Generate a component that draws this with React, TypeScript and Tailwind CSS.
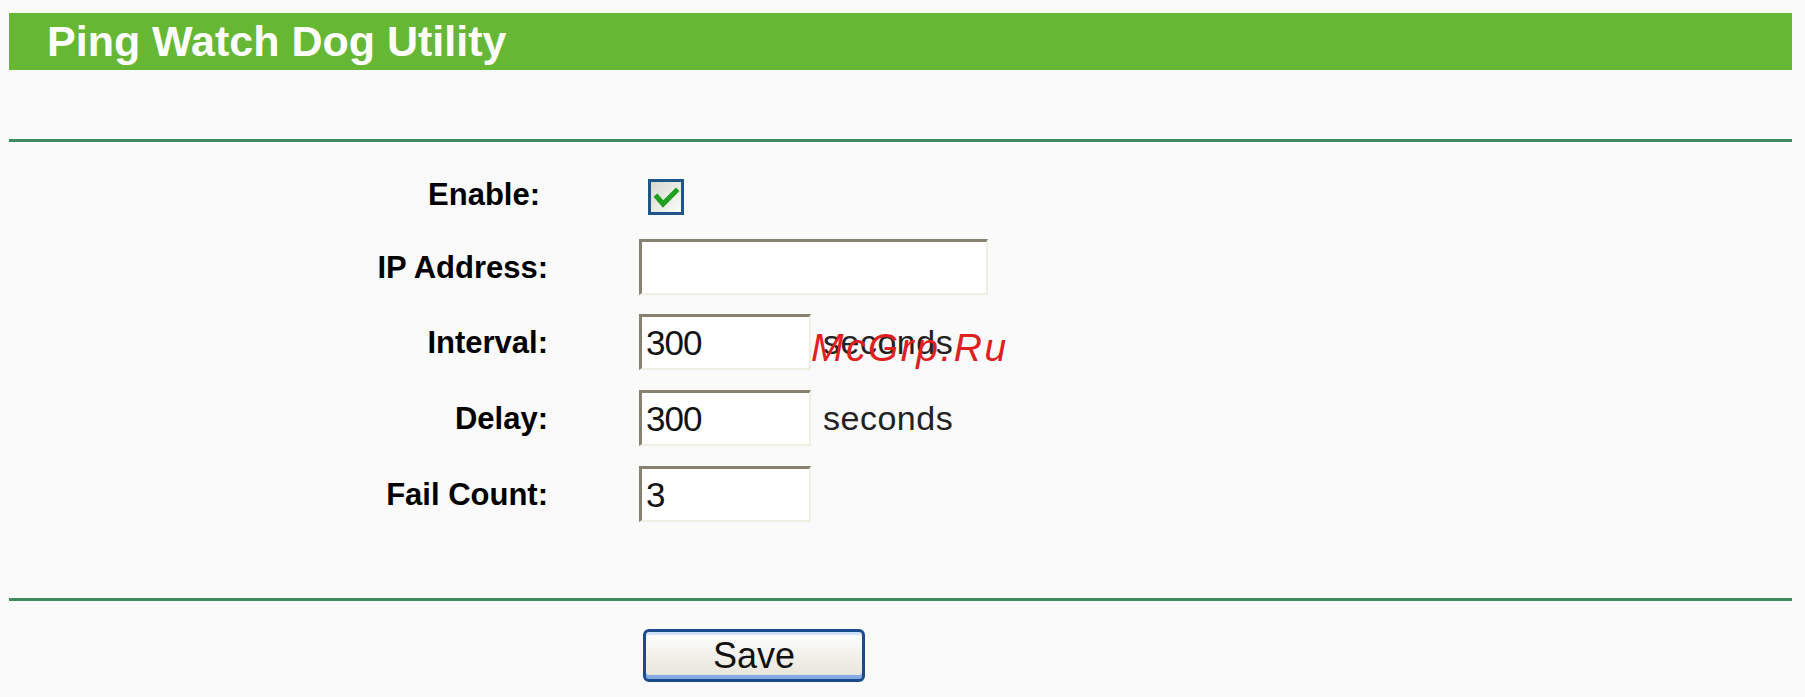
import type { ReactNode } from 'react';

const FONT = "font-['Liberation_Sans',Arial,sans-serif]";

function Row({ label, h, labelPad = '', children }: { label: string; h: string; labelPad?: string; children: ReactNode }) {
  return (
    <div className={`flex items-center ${h}`}>
      <div className={`w-[539px] text-right text-[31px] font-bold leading-none text-black ${labelPad}`}>{label}</div>
      <div className="ml-[91px] flex items-center">{children}</div>
    </div>
  );
}

function TextBox({ value, w }: { value: string; w: string }) {
  return (
    <div
      className={`flex h-[56px] ${w} items-center border-t-[3px] border-l-[3px] border-r-2 border-b-2 border-t-[#85836f] border-l-[#85836f] border-r-[#efeee0] border-b-[#efeee0] bg-white pl-[4px] text-[35px] leading-none tracking-[-1px] text-[#111]`}
    >
      {value}
    </div>
  );
}

function Seconds({ children }: { children?: ReactNode }) {
  return (
    <span className="relative ml-[12px] text-[34px] leading-none tracking-[0.5px] text-[#222]">
      seconds
      {children}
    </span>
  );
}

export default function App() {
  return (
    <div className={`min-h-screen w-full bg-[#fafafa] ${FONT}`}>
      <div className="w-[1783px] pl-[9px] pt-[13px] box-content">
        {/* title bar */}
        <div className="flex h-[57px] items-center bg-[#66b834] pl-[38px]">
          <h1 className="text-[43px] font-bold leading-none text-white">Ping Watch Dog Utility</h1>
        </div>

        <div className="mt-[69px] h-[3px] bg-[#3d8b5e]" />

        {/* form */}
        <div className="pt-[22px]">
          <Row label="Enable:" h="h-[66px]" labelPad="pr-[8px] -mt-[6px]">
            <div className="ml-[9px] flex h-[36px] w-[36px] items-center justify-center border-[3px] border-[#1f5587] bg-gradient-to-br from-[#d9d9d2] to-[#fbfbf8]">
              <svg width="30" height="30" viewBox="0 0 30 30">
                <polyline points="6,15 12,22 25,9" fill="none" stroke="#1fa01f" strokeWidth="5" strokeLinecap="square" />
              </svg>
            </div>
          </Row>
          <Row label="IP Address:" h="h-[74px]">
            <TextBox value="" w="w-[349px]" />
          </Row>
          <Row label="Interval:" h="h-[76px]">
            <TextBox value="300" w="w-[172px]" />
            <Seconds>
              <span className="absolute left-[-12px] top-[3px] whitespace-nowrap text-[39px] italic leading-none tracking-[2.5px] text-[#e02020]">
                McGrp.Ru
              </span>
            </Seconds>
          </Row>
          <Row label="Delay:" h="h-[76px]">
            <TextBox value="300" w="w-[172px]" />
            <Seconds />
          </Row>
          <Row label="Fail Count:" h="h-[76px]">
            <TextBox value="3" w="w-[172px]" />
          </Row>
        </div>

        <div className="mt-[66px] h-[3px] bg-[#3d8b5e]" />

        <div className="ml-[634px] mt-[28px]">
          <button className="h-[53px] w-[222px] rounded-[6px] border-[3px] border-[#1a4b8c] bg-gradient-to-b from-[#fefefe] to-[#e6e4d8] text-[36px] leading-none text-[#111] shadow-[inset_0_3px_0_#cfe0f8,inset_0_-4px_0_#86aae3]">
            Save
          </button>
        </div>
      </div>
    </div>
  );
}
